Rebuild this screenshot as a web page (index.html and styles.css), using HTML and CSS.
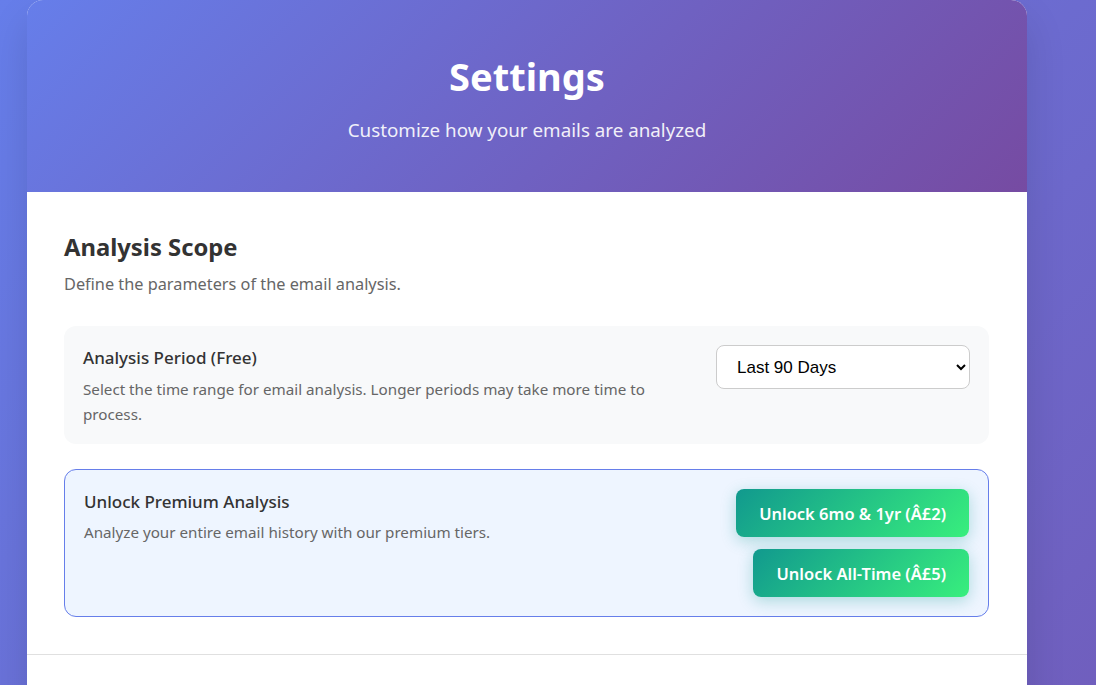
FILE: index.html
```html
<!DOCTYPE html>
<html lang="en">
<head>
<meta charset="utf-8">
<title>Settings</title>
<link rel="stylesheet" href="styles.css">
</head>
<body>
<div class="container">
  <header class="header">
    <h1 class="title">Settings</h1>
    <p class="subtitle">Customize how your emails are analyzed</p>
  </header>
  <section class="section">
    <h2 class="section-title">Analysis Scope</h2>
    <p class="section-desc">Define the parameters of the email analysis.</p>
    <div class="setting-row">
      <div class="setting-info">
        <h3 class="setting-label">Analysis Period (Free)</h3>
        <p class="setting-desc">Select the time range for email analysis. Longer periods may take more time to process.</p>
      </div>
      <select class="select">
        <option>Last 90 Days</option>
        <option>Last 30 Days</option>
        <option>Last 7 Days</option>
      </select>
    </div>
    <div class="premium">
      <div class="setting-info">
        <h3 class="setting-label">Unlock Premium Analysis</h3>
        <p class="setting-desc">Analyze your entire email history with our premium tiers.</p>
      </div>
      <div class="premium-actions">
        <button class="btn">Unlock 6mo &amp; 1yr (Â£2)</button>
        <button class="btn">Unlock All-Time (Â£5)</button>
      </div>
    </div>
  </section>
  <section class="section section-empty"></section>
</div>
</body>
</html>
```
FILE: styles.css
```css
* { box-sizing: border-box; }
body {
  margin: 0;
  min-height: 1800px;
  background: linear-gradient(135deg, #667eea 0%, #764ba2 100%);
  font-family: "Noto Sans", "Open Sans", sans-serif;
  color: #333;
}
.container {
  width: 1000px;
  margin-left: 27px;
  background: #fff;
  border-radius: 16px 16px 0 0;
  box-shadow: 0 20px 40px rgba(0, 0, 0, 0.12);
  overflow: hidden;
  min-height: 1800px;
}
.header {
  height: 192px;
  background: linear-gradient(135deg, #667eea 0%, #764ba2 100%);
  color: #fff;
  text-align: center;
  padding-top: 50px;
}
.title {
  margin: 0;
  font-size: 38px;
  font-weight: 700;
  line-height: 52px;
}
.subtitle {
  margin: 15px 0 0;
  font-size: 18.8px;
  line-height: 26px;
  opacity: 0.9;
}
.section {
  padding: 39px 38px 37px 37px;
  border-bottom: 1px solid #e0e0e0;
}
.section-empty { border-bottom: none; }
.section-title {
  margin: 0;
  font-size: 23.8px;
  font-weight: 700;
  line-height: 32px;
  color: #333;
}
.section-desc {
  margin: 8px 0 0;
  font-size: 16.3px;
  line-height: 26px;
  color: #666;
}
.setting-row {
  margin-top: 29px;
  background: #f8f9fa;
  border-radius: 12px;
  padding: 19px 19px 17px 19px;
  display: flex;
  justify-content: space-between;
  align-items: flex-start;
  gap: 50px;
}
.setting-info { flex: 1; }
.setting-label {
  margin: 0;
  font-size: 17px;
  font-weight: 500;
  line-height: 26px;
  color: #333;
}
.setting-desc {
  margin: 6px 0 0;
  font-size: 15.2px;
  line-height: 25px;
  color: #666;
}
.select {
  width: 254px;
  height: 44px;
  padding: 0 16px;
  font-family: "Liberation Sans", Arial, sans-serif;
  font-size: 17px;
  color: #000;
  background: #fff;
  border: 1px solid #ccc;
  border-radius: 8px;
}
.premium {
  margin-top: 25px;
  background: #eef5ff;
  border: 1px solid #667eea;
  border-radius: 12px;
  padding: 19px 19px 19px 19px;
  display: flex;
  justify-content: space-between;
  align-items: flex-start;
  gap: 40px;
}
.premium .setting-desc { margin-top: 5px; }
.premium-actions {
  display: flex;
  flex-direction: column;
  align-items: flex-end;
  gap: 12px;
}
.btn {
  height: 48px;
  padding: 0 23px;
  border: none;
  border-radius: 8px;
  background: linear-gradient(135deg, #11998e 0%, #38ef7d 100%);
  color: #fff;
  font-family: "Noto Sans", "Open Sans", sans-serif;
  font-size: 16.5px;
  font-weight: 600;
  box-shadow: 0 4px 15px rgba(17, 153, 142, 0.3);
  cursor: pointer;
}
```
